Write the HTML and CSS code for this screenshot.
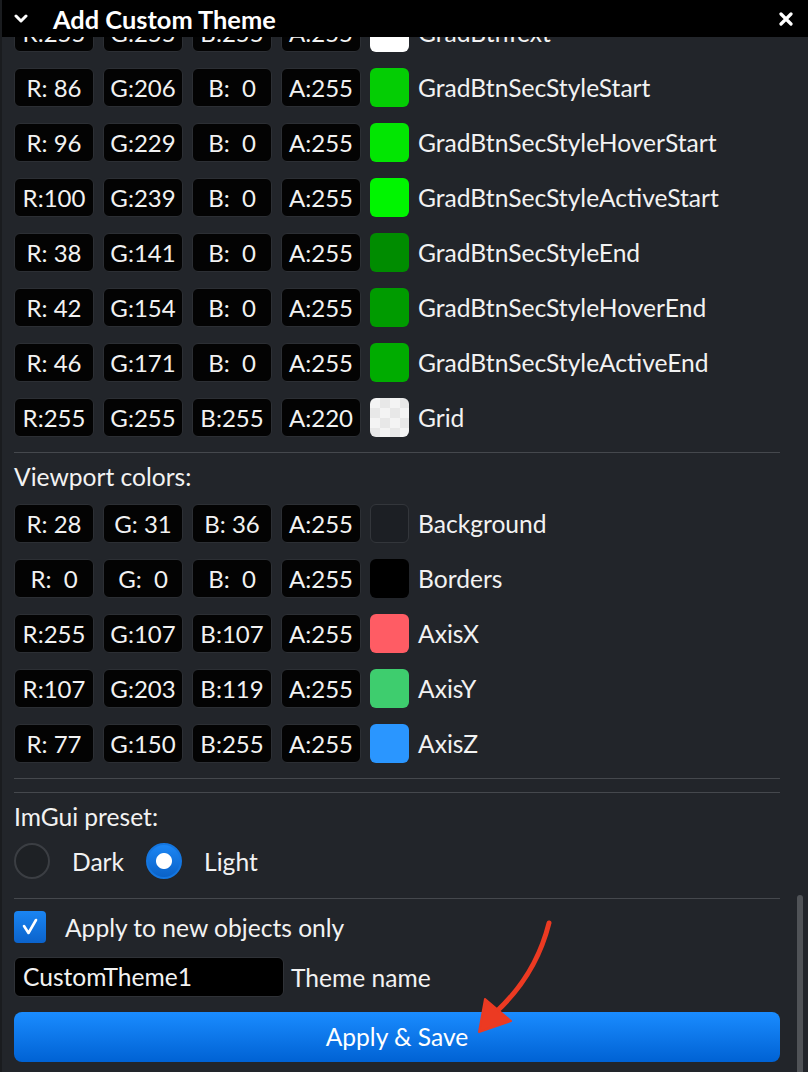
FILE: index.html
```html
<!DOCTYPE html>
<html lang="en">
<head>
  <meta charset="UTF-8">
  <title>Add Custom Theme</title>
  <link rel="stylesheet" href="styles.css">
</head>
<body>
  <div class="window">
    <div class="titlebar">
      <svg class="chevron" width="14" height="10" viewBox="0 0 14 10"><path d="M2 2 L7 7 L12 2" fill="none" stroke="#fff" stroke-width="3" stroke-linecap="round" stroke-linejoin="round"/></svg>
      <span class="title">Add Custom Theme</span>
      <svg class="close" width="14" height="14" viewBox="0 0 14 14"><path d="M2 2 L12 12 M12 2 L2 12" stroke="#fff" stroke-width="3.2" stroke-linecap="round"/></svg>
    </div>

    <div class="content">
      <div class="main">
        <div class="rows first">
          <div class="row"><span class="num">R:255</span><span class="num">G:255</span><span class="num">B:255</span><span class="num">A:255</span><span class="swatch white"></span><span class="label">GradBtnText</span></div>
          <div class="row"><span class="num">R: 86</span><span class="num">G:206</span><span class="num">B:  0</span><span class="num">A:255</span><span class="swatch" style="background:rgb(4,205,4)"></span><span class="label">GradBtnSecStyleStart</span></div>
          <div class="row"><span class="num">R: 96</span><span class="num">G:229</span><span class="num">B:  0</span><span class="num">A:255</span><span class="swatch" style="background:rgb(2,230,2)"></span><span class="label">GradBtnSecStyleHoverStart</span></div>
          <div class="row"><span class="num">R:100</span><span class="num">G:239</span><span class="num">B:  0</span><span class="num">A:255</span><span class="swatch" style="background:rgb(0,245,0)"></span><span class="label">GradBtnSecStyleActiveStart</span></div>
          <div class="row"><span class="num">R: 38</span><span class="num">G:141</span><span class="num">B:  0</span><span class="num">A:255</span><span class="swatch" style="background:rgb(0,140,0)"></span><span class="label">GradBtnSecStyleEnd</span></div>
          <div class="row"><span class="num">R: 42</span><span class="num">G:154</span><span class="num">B:  0</span><span class="num">A:255</span><span class="swatch" style="background:rgb(0,155,0)"></span><span class="label">GradBtnSecStyleHoverEnd</span></div>
          <div class="row"><span class="num">R: 46</span><span class="num">G:171</span><span class="num">B:  0</span><span class="num">A:255</span><span class="swatch" style="background:rgb(0,172,0)"></span><span class="label">GradBtnSecStyleActiveEnd</span></div>
          <div class="row"><span class="num">R:255</span><span class="num">G:255</span><span class="num">B:255</span><span class="num">A:220</span><span class="swatch checker"></span><span class="label">Grid</span></div>
        </div>

        <div class="sep sep-top"></div>
        <div class="heading">Viewport colors:</div>

        <div class="rows">
          <div class="row"><span class="num">R: 28</span><span class="num">G: 31</span><span class="num">B: 36</span><span class="num">A:255</span><span class="swatch bordered" style="background:rgb(28,31,36)"></span><span class="label">Background</span></div>
          <div class="row"><span class="num">R:  0</span><span class="num">G:  0</span><span class="num">B:  0</span><span class="num">A:255</span><span class="swatch" style="background:rgb(0,0,0)"></span><span class="label">Borders</span></div>
          <div class="row"><span class="num">R:255</span><span class="num">G:107</span><span class="num">B:107</span><span class="num">A:255</span><span class="swatch" style="background:rgb(255,92,100)"></span><span class="label">AxisX</span></div>
          <div class="row"><span class="num">R:107</span><span class="num">G:203</span><span class="num">B:119</span><span class="num">A:255</span><span class="swatch" style="background:rgb(62,205,110)"></span><span class="label">AxisY</span></div>
          <div class="row"><span class="num">R: 77</span><span class="num">G:150</span><span class="num">B:255</span><span class="num">A:255</span><span class="swatch" style="background:rgb(42,150,255)"></span><span class="label">AxisZ</span></div>
        </div>

        <div class="sep sep-a"></div>
        <div class="sep sep-b"></div>
        <div class="heading">ImGui preset:</div>

        <div class="radios">
          <span class="radio"></span><span class="radio-label">Dark</span>
          <span class="radio on"></span><span class="radio-label">Light</span>
        </div>

        <div class="sep sep-c"></div>

        <div class="check-row">
          <span class="checkbox">
            <svg width="20" height="20" viewBox="0 0 20 20"><path d="M4 9 L8.5 16 L16 3" fill="none" stroke="#fff" stroke-width="2.6" stroke-linecap="round" stroke-linejoin="round"/></svg>
          </span>
          <span class="check-label">Apply to new objects only</span>
        </div>

        <div class="name-row">
          <span class="name-input">CustomTheme1</span>
          <span class="name-label">Theme name</span>
        </div>

        <div class="save-btn">Apply &amp; Save</div>
      </div>

      <div class="scrollbar"><div class="thumb"></div></div>
    </div>

    <svg class="arrow" width="808" height="1072" viewBox="0 0 808 1072">
      <path d="M549 923 Q536 975 496 1012" fill="none" stroke="#ec3a22" stroke-width="5" stroke-linecap="round"/>
      <path d="M479 1032 L485 999 L511 1021 Z" fill="#ec3a22" stroke="#ec3a22" stroke-width="2" stroke-linejoin="round"/>
    </svg>
  </div>
</body>
</html>
```

FILE: styles.css
```css
body {
  margin: 0;
  background-color: #22252a;
  color: #f2f2f2;
  font-family: Lato, 'Noto Sans', sans-serif;
  font-size: 24.6px;
  overflow: hidden;
}
.window {
  position: relative;
  width: 808px;
  height: 1072px;
  display: flex;
  flex-direction: column;
  overflow: hidden;
  border-left: 2px solid #1a1c1f;
  box-sizing: border-box;
}
.titlebar {
  height: 37px;
  flex-shrink: 0;
  background-color: #000;
  display: flex;
  align-items: center;
  padding: 0 14px 0 12px;
  position: relative;
  z-index: 2;
}
.chevron {
  margin-right: 25px;
  margin-top: 1px;
}
.title {
  font-weight: bold;
  font-size: 25.4px;
  color: white;
  flex: 1;
}
.close {
  margin-right: 1px;
}
.content {
  flex: 1;
  display: flex;
  min-height: 0;
  overflow: hidden;
}
.main {
  width: 766px;
  padding-left: 12px;
  display: flex;
  flex-direction: column;
}
.rows {
  display: flex;
  flex-direction: column;
  gap: 16px;
}
.rows.first {
  margin-top: -24px;
}
.row {
  display: flex;
  align-items: center;
  height: 39px;
  gap: 9px;
}
.num {
  width: 78px;
  height: 37px;
  background-color: #030303;
  border: 1px solid #2c2f34;
  border-radius: 6px;
  white-space: pre;
  text-align: center;
  line-height: 37px;
  font-size: 24px;
}
.swatch {
  width: 39px;
  height: 39px;
  border-radius: 6px;
  box-sizing: border-box;
}
.swatch.white {
  background: #fff;
}
.swatch.bordered {
  border: 1px solid #33363b;
}
.swatch.checker {
  background-color: #f4f4f4;
  background-image: conic-gradient(#e8e8e8 25%, transparent 0 50%, #e8e8e8 0 75%, transparent 0);
  background-size: 20px 20px;
}
.label {
  white-space: nowrap;
}
.sep {
  height: 1px;
  background-color: #45484d;
}
.sep-top {
  margin-top: 15px;
}
.sep-a {
  margin-top: 15px;
}
.sep-b {
  margin-top: 13px;
}
.sep-c {
  margin-top: 19px;
}
.heading {
  line-height: 34px;
  margin: 7px 0 10px;
}
.radios {
  display: flex;
  align-items: center;
  height: 36px;
  margin-top: -1px;
}
.radio {
  width: 32px;
  height: 32px;
  border-radius: 50%;
  border: 2px solid #3b3e43;
  background-color: #1e2125;
}
.radio.on {
  border-color: #1476e0;
  background: radial-gradient(circle, #fff 0 7.5px, transparent 8.5px), linear-gradient(#1c86f4, #0a62c8);
}
.radio-label {
  margin: 0 22px;
}
.check-row {
  display: flex;
  align-items: center;
  margin-top: 12px;
  height: 32px;
}
.checkbox {
  width: 32px;
  height: 32px;
  border-radius: 4px;
  background: linear-gradient(#1a85f2, #0b63cc);
  display: flex;
  align-items: center;
  justify-content: center;
}
.check-label {
  margin-left: 19px;
}
.name-row {
  display: flex;
  align-items: center;
  margin-top: 14px;
}
.name-input {
  width: 260px;
  height: 38px;
  line-height: 38px;
  padding-left: 8px;
  background-color: #000;
  border: 1px solid #2f3237;
  border-radius: 6px;
}
.name-label {
  margin-left: 7px;
}
.save-btn {
  margin-top: 15px;
  height: 50px;
  line-height: 50px;
  text-align: center;
  color: white;
  border-radius: 8px;
  background: linear-gradient(#1a8cff, #0062d4);
}
.scrollbar {
  width: 6px;
  margin-left: 17px;
  padding-top: 858px;
}
.thumb {
  height: 200px;
  background-color: #505357;
  border-radius: 3px;
}
.arrow {
  position: absolute;
  left: -2px;
  top: 0;
  pointer-events: none;
  z-index: 3;
}
```
